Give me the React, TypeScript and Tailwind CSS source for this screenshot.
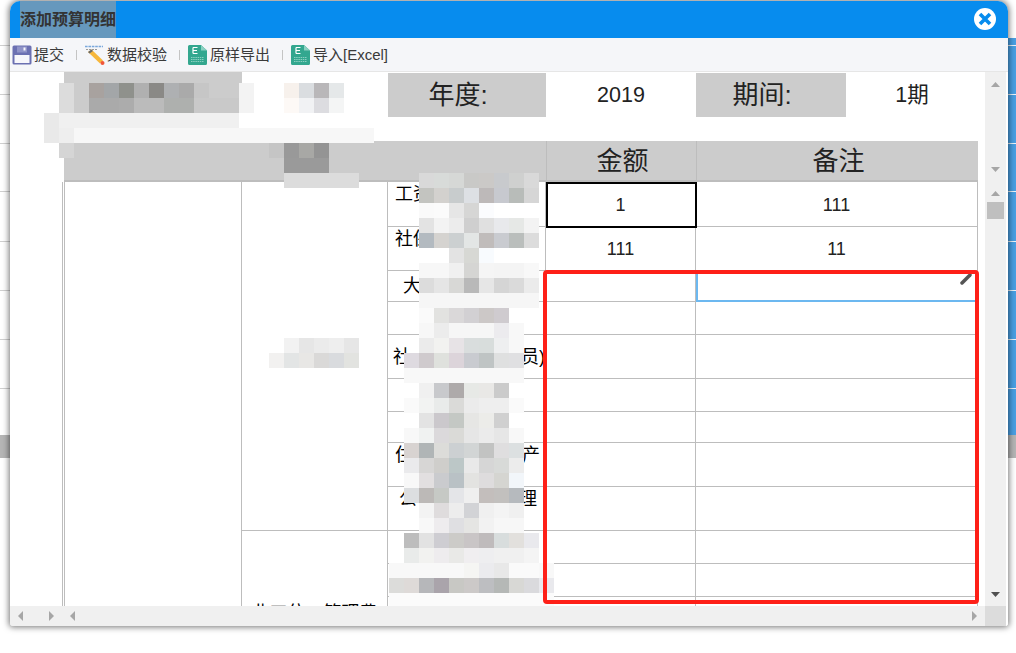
import React from 'react'

const FONT = "[font-family:'Liberation_Sans','Noto_Sans_CJK_SC',sans-serif]"

const bgLines = [45, 94, 143, 191, 241, 290, 339, 388]

// mosaic blocks over the blurred-out text, _ means see through
const blocks: { x: number; y: number; rows: string[] }[] = [
  {
    x: 59,
    y: 83,
    rows: [
      'dcdcdc cccccc a8a29f a3a6a8 8f918c b0b0b0 8a8986 aeb0b2 aaaaaa c6c6c6 cccccc cccccc f3f3f3 ffffff ffffff f7f1ec dadde0 b9b7b9 e5e8e9 ffffff ffffff',
      'dcdcdc cccccc aaaaaa aaaaaa acacac bbbbbb bbbbbb aeb0ae aeb0ae c9c9c9 c9c9c9 c9c9c9 f3f3f3 ffffff ffffff fdf9f6 f1f2f4 dcdce0 f4f5f5 ffffff ffffff',
      'f0f0f0 f0f0f0 f0f0f0 f0f0f0 f0f0f0 f0f0f0 f0f0f0 f0f0f0 f0f0f0 f0f0f0 f0f0f0 f0f0f0 ffffff ffffff ffffff ffffff ffffff ffffff ffffff ffffff ffffff',
      'eeeeee f7f7f7 f7f7f7 f7f7f7 f7f7f7 f7f7f7 f7f7f7 f7f7f7 f7f7f7 f7f7f7 f7f7f7 f7f7f7 f7f7f7 f7f7f7 f7f7f7 f7f7f7 f7f7f7 f7f7f7 f7f7f7 f7f7f7 f7f7f7',
      'd5d5d5 _ _ _ _ _ _ _ _ _ _ _ _ _ c5c5c5 999999 a8a8a5 949494 _ _',
      '_ _ _ _ _ _ _ _ _ _ _ _ _ _ _ 9a9a9a 9a9a9a 9a9a9a _ _',
    ],
  },
  { x: 44, y: 113, rows: ['e9e9e9', 'e9e9e9'] },
  {
    x: 284,
    y: 173,
    rows: ['dcdcdc dcdcdc dcdcdc dcdcdc dcdcdc'],
  },
  {
    x: 269,
    y: 338,
    rows: [
      '_ f2f2f2 e6e6e6 ebebeb eeeeee e6e6e6',
      'f2f1f0 e3e5e5 e8e7e5 dad9d8 d9dbde e2e3e0',
    ],
  },
  {
    x: 389,
    y: 173,
    rows: [
      '_ _ d9d9d9 d8dbd9 d6d8d6 c9c9c7 cbc9c7 c8cacd cfd0cf d9d9d9 _',
      '_ _ c3c4c0 d3d1ce c8cccd dde0e4 bdb9b9 c7c9cf b8bcb9 d6d6d6 _',
      '_ _ fafafa fbfbfb e6e6e6 d6d6d5 fbfcfe ffffff ffffff ffffff _',
      '_ _ e3e3e3 f3f3f3 ececec cfcfcf e0e0e0 e8e9ec e6e8e6 f3f3f3 _',
      '_ _ b3bac0 d5d3d0 ccd0d1 e3e6e5 c0bcbb c9cbd0 babebc dcdcdc _',
      '_ _ ffffff ffffff e3e3e3 d7d8d4 f8fbfe ffffff ffffff ffffff _',
      '_ _ f7f7f7 f7f7f7 f0f0f0 d5d5d3 f5f5f5 f4f4f4 f4f4f4 f8f8f8 _',
      '_ _ dcdcdc e5e5e5 d8d8d6 b9b9b9 e6e6e6 d5d5d5 dadada ebebeb _',
      '_ _ f6f6f6 f6f6f6 f6f6f6 f6f6f6 f6f6f6 f6f6f6 f6f6f6 f6f6f6 _',
      '_ _ fafafa e2e2e0 dad8d9 d2d0d3 ccc8c7 cfcbcf ffffff _ _',
      '_ _ f7f7f7 ececec f6f6f6 f6f6f6 f6f6f6 ecebee f8f8f8 _ _',
      '_ _ ebebeb f2f2f0 e7e3e6 d9dddd d8dddc eeeff0 f8f8f8 _ _',
      '_ dedae0 cfcacd dfe1dd dcd4da c9cbd0 bfc4c4 dfe0e0 e0e0e2 _ _',
      '_ f8f8f8 f8f8f8 f8f8f8 f8f8f8 f8f8f8 f8f8f8 f8f8f8 f8f8f8 _ _',
      '_ _ f0f0f0 c8c9cc aeaaaa e7e9e6 e9e8e6 cbcbcb ffffff _ _',
      '_ fafafa f2f3f2 e9ebea dadad8 ebebeb eeeeee eeeeee fafafa _ _',
      '_ _ e3e3e3 cbc8cc c4c8c4 e6e6e4 ecece9 d0d0d0 ffffff _ _',
      '_ f8f8f8 f0f2f1 dbd9db dadad7 e6e6e6 ebebeb e6e6e6 f8f8f8 _ _',
      '_ d8d3d1 b0b5b6 dcdcd9 ccd0d2 d2d5d5 c2c3c2 dfdedf dce0e1 _ _',
      '_ eaeaec d7d6d5 cfcecb bcc7c7 e9e9e9 d6d6d6 d8dad8 ececec _ _',
      '_ f8f8f8 e2dfe0 cacbce b9c1c5 e3e3e1 dedcdd d5d5d1 f2f6fa _ _',
      '_ dcdee0 bcb9b7 c6c9c5 e4e5e8 efefef c3bebc c2c0be b6babe _ _',
      '_ _ f3f3f3 dfdcdd ededed d2d3d6 f0f0f0 f4f4f4 f0f0f0 _ _',
      '_ _ f8f8f8 eeecee dfdfe2 e5e5e3 f2f2f2 f7f7f7 f7f7f7 _ _',
      '_ bdbdbd e2e2e2 cecdd2 cccbc8 c9c5c6 bfbbbc d8dddd e2e0dd e9e9ed _',
      '_ e9ebea f2f2f0 eeecee e9e9e7 f0eef0 eeeef0 f0f0f0 f0f0f0 f4f4f4 _',
      'f8f8f8 f8f8f8 f8f8f8 f8f8f8 f8f8f8 f5f5f3 ebebee e8e8e8 fafafa fafafa f8f8f8',
      'dcdcda dedad8 b6b7ba aaa4ab c8c8c4 ccc9c8 bdbec1 b5b8b6 d8d8d5 dadadd e9e9ed',
      'fbfbfb fbfbfb fbfbfb fbfbfb fbfbfb fbfbfb fbfbfb fbfbfb fbfbfb fbfbfb fbfbfb',
    ],
  },
]

const rowHeights = [45, 44, 31, 33, 44, 33, 31, 44, 44, 33, 33, 33, 33, 33]

const Triangle = ({ dir, color = '#a6a6a6' }: { dir: 'up' | 'down' | 'left' | 'right'; color?: string }) => {
  const points = {
    up: '0,5 9,5 4.5,0',
    down: '0,0 9,0 4.5,5',
    left: '5,0 5,10 0,5',
    right: '0,0 0,10 5,5',
  }[dir]
  const wide = dir === 'up' || dir === 'down'
  return (
    <svg width={wide ? 9 : 5} height={wide ? 5 : 10} viewBox={wide ? '0 0 9 5' : '0 0 5 10'} className="block">
      <polygon points={points} fill={color} />
    </svg>
  )
}

const SaveIcon = () => (
  <svg width="20" height="20" viewBox="0 0 20 20">
    <rect x="0.5" y="0.5" width="19" height="19" rx="1.5" fill="#6b70b2" />
    <rect x="2.5" y="10" width="15" height="8" fill="#f6f6fb" />
    <rect x="5" y="1.5" width="10" height="6" fill="#8f93c8" />
    <rect x="11.5" y="2.5" width="2" height="3" fill="#f6f6fb" />
  </svg>
)

const CheckIcon = () => (
  <svg width="20" height="20" viewBox="0 0 20 20">
    <path d="M0 1.5h18" stroke="#7aa8dc" strokeWidth="1.4" strokeDasharray="2.6 0.8" />
    <path d="M1 4.5h12" stroke="#9a9a9a" strokeWidth="1" strokeDasharray="2 1" />
    <path d="M3 7 6.500 4.500 18 15.500 15 18.500Z" fill="#f6b73c" />
    <path d="M3 7 6.500 4.500 8 6 4.500 8.500Z" fill="#6a6a6a" />
    <circle cx="17.500" cy="18" r="2" fill="#f0563a" />
  </svg>
)

const SheetIcon = () => (
  <svg width="19" height="20" viewBox="0 0 19 20">
    <path d="M0 1.5A1.5 1.5 0 0 1 1.5 0H13l6 5.5V18.500A1.500 1.500 0 0 1 17.500 20H1.500A1.500 1.500 0 0 1 0 18.500Z" fill="#33a78f" />
    <path d="M13 0l6 5.500h-6Z" fill="#8bd0c1" />
    <path d="M5 2.500H9.500M5 5.500H9M5 8.500H9.500M5 2.500V8.500" stroke="#fff" strokeWidth="1.200" fill="none" />
    <path d="M3 12.500H16M3 14.500H16M3 16.500H16" stroke="#8bd0c1" strokeWidth="1" strokeDasharray="1.500 0.700" />
  </svg>
)

const CloseIcon = () => (
  <svg width="22" height="22" viewBox="0 0 22 22">
    <circle cx="11" cy="11" r="11" fill="#fff" />
    <path d="M6 6 16 16M16 6 6 16" stroke="#078cee" strokeWidth="3.600" />
  </svg>
)

const ToolItem = ({ icon, label, width, gap }: { icon: React.ReactNode; label: string; width: string; gap: string }) => (
  <div className={`flex items-center ${gap} ${width}`}>
    {icon}
    <span className="text-[15px] leading-none whitespace-nowrap text-[#3a3a3a]">{label}</span>
  </div>
)

const Sep = () => <div className="h-[10px] w-px bg-[#c4c4c4]" />

function BudgetTable() {
  const cell = 'border-r border-b border-[#bdbdbd] pt-[2px] align-middle text-center'
  const label = 'border-r border-b border-[#bdbdbd] px-[7px] text-[18px] leading-[22px] text-black'
  const firstRows: React.ReactNode[] = [
    <td key="c" className={`${label} align-top pt-[1px]`}>工资</td>,
    <td key="c" className={`${label} align-top pt-[1px]`}>社保</td>,
    <td key="c" className={`${label} pl-[15px]`}>大</td>,
    <td key="c" className={label}></td>,
    <td key="c" className={`${label} pl-[5px] pr-0`}>
      <div className="flex justify-between"><span>社</span><span>员)</span></div>
    </td>,
    <td key="c" className={label}></td>,
    <td key="c" className={label}></td>,
    <td key="c" className={`${label} pt-[1px] pr-[5px] align-top`}>
      <div className="flex justify-between"><span>住</span><span>产</span></div>
    </td>,
    <td key="c" className={`${label} pt-[1px] pl-[11px] pr-[8px] align-top`}>
      <div className="flex justify-between"><span>公</span><span>理</span></div>
    </td>,
  ]
  const values = [['1', '111'], ['111', '11']]

  return (
    <table className="w-[915px] table-fixed border-separate border-spacing-0">
      <colgroup>
        <col className="w-[179px]" />
        <col className="w-[146px]" />
        <col className="w-[158px]" />
        <col className="w-[150px]" />
        <col className="w-[282px]" />
      </colgroup>
      <tbody>
        {rowHeights.map((h, i) => (
          <tr key={i} style={{ height: h }}>
            {i === 0 && (
              <td
                rowSpan={14}
                className="border-r border-[#bdbdbd] shadow-[inset_1px_0_0_#ffffff,inset_2px_0_0_#bdbdbd,-1px_0_0_#bdbdbd]"
              ></td>
            )}
            {i === 0 && <td rowSpan={9} className="border-r border-b border-[#bdbdbd]"></td>}
            {i === 9 && (
              <td rowSpan={5} className="border-r border-[#bdbdbd] text-center text-[18px] whitespace-nowrap text-black">
                业工位一管理费
              </td>
            )}
            {firstRows[i] ?? <td className={label}></td>}
            <td className={`${cell} text-[18px] text-[#222]`}>{values[i]?.[0]}</td>
            <td className={`${cell} text-[18px] text-[#222]`}>{values[i]?.[1]}</td>
          </tr>
        ))}
      </tbody>
    </table>
  )
}

export default function App() {
  return (
    <div className={`relative h-[653px] w-[1016px] overflow-hidden bg-white ${FONT}`}>
      {/* page behind the dialog */}
      <div className="flex h-[458px] flex-col">
        <div className="h-[38px]" />
        <div className="flex h-[397px] justify-end">
          <div className="w-[10px] bg-[#4a9fe3]" />
        </div>
        <div className="h-[23px] bg-[#b5b5b5]" />
      </div>
      {bgLines.map(y => (
        <div key={y} className="absolute inset-x-0 flex h-px" style={{ top: y }}>
          <div className="flex-1 bg-[#cfcfcf]" />
          <div className="w-[10px] bg-[#eef5fb]" />
        </div>
      ))}

      {/* dialog */}
      <div className="absolute top-[1px] left-[10px] flex h-[625px] w-[998px] flex-col overflow-hidden rounded-t-[10px] rounded-b-[3px] bg-[#f0f0f0] shadow-[0_0_6px_1px_rgba(0,0,0,0.55)]">
        <div className="flex h-[37px] shrink-0 items-center justify-between bg-[#078cee] pr-[12px] pl-[10px]">
          <div className="flex h-full w-[96px] items-center bg-[#6698bd] text-[16px] font-bold whitespace-nowrap text-[#333]">
            添加预算明细
          </div>
          <div className="-mt-[1px]"><CloseIcon /></div>
        </div>

        <div className="flex h-[34px] shrink-0 items-center border-b border-[#e6e6e6] bg-[#f5f6f9] pl-[2px]">
          <ToolItem icon={<SaveIcon />} label="提交" width="w-[64px]" gap="gap-[2px]" />
          <Sep />
          <div className="ml-[8px]"><ToolItem icon={<CheckIcon />} label="数据校验" width="w-[94px]" gap="gap-[2px]" /></div>
          <Sep />
          <div className="ml-[8px]"><ToolItem icon={<SheetIcon />} label="原样导出" width="w-[94px]" gap="gap-[3px]" /></div>
          <Sep />
          <div className="ml-[8px]"><ToolItem icon={<SheetIcon />} label="导入[Excel]" width="w-[100px]" gap="gap-[3px]" /></div>
        </div>

        <div className="flex min-h-0 flex-1">
          <div className="relative w-[975px] overflow-hidden bg-white pl-[53px]">
            <div className="flex h-[45px] pt-px text-[#222]">
              <div className="w-[325px]">
                <div className="-mt-px ml-px h-[44px] w-[178px] bg-[#cccccc]" />
              </div>
              <div className="flex h-[44px] w-[158px] items-center justify-center bg-[#cccccc] pr-[18px] text-[26px]">年度:</div>
              <div className="flex h-[44px] w-[150px] items-center justify-center text-[21.500px]">2019</div>
              <div className="flex h-[44px] w-[150px] items-center justify-center bg-[#cccccc] pr-[18px] text-[26px]">期间:</div>
              <div className="flex h-[44px] w-[132px] items-center justify-center text-[21.500px]">1期</div>
            </div>

            <div className="mt-[24px] ml-px flex h-[41px] w-[914px] border-b-2 border-[#bdbdbd] bg-[#cccccc] text-[26px] text-[#222]">
              <div className="w-[482px]" />
              <div className="flex w-[150px] items-center justify-center border-l border-[#bdbdbd] pt-[2px] pl-[2px]">金额</div>
              <div className="flex flex-1 items-center justify-center border-l border-[#bdbdbd] pt-[2px] pl-[2px]">备注</div>
            </div>

            <BudgetTable />

            {blocks.map(b => (
              <div key={`${b.x}-${b.y}`} className="absolute flex flex-col" style={{ left: b.x - 10, top: b.y - 72 }}>
                {b.rows.map((row, r) => (
                  <div key={r} className="flex">
                    {row.split(' ').map((c, k) => (
                      <div key={k} className="h-[15px] w-[15px]" style={{ background: c === '_' ? 'transparent' : `#${c}` }} />
                    ))}
                  </div>
                ))}
              </div>
            ))}

            {/* selected cells */}
            <div className="absolute top-[110px] left-[536px] h-[46px] w-[151px] border-2 border-black" />
            <div className="absolute top-[199px] left-[686px] h-[31px] w-[282px] border-b-2 border-l-2 border-[#6cb8f0]" />
            <svg width="12" height="12" viewBox="0 0 12 12" className="absolute top-[201px] left-[950px]">
              <path d="M2 10 10 2" stroke="#555" strokeWidth="3.500" strokeLinecap="round" />
            </svg>
            {/* red mark drawn on the screenshot */}
            <div className="absolute top-[198px] left-[533px] h-[334px] w-[436px] rounded-[4px] border-4 border-[#fe2018]" />
          </div>

          <div className="relative flex w-[21px] flex-col items-center bg-[#f0f0f0] pt-[10px]">
            <Triangle dir="up" />
            <div className="mt-[80px]"><Triangle dir="down" /></div>
            <div className="mt-[19px]"><Triangle dir="up" /></div>
            <div className="mt-[6px] h-[17px] w-[17px] bg-[#bfbfbf]" />
            <div className="mt-auto mb-[9px]"><Triangle dir="down" color="#505050" /></div>
          </div>
          <div className="w-[2px] bg-white" />
        </div>

        <div className="flex h-[20px] shrink-0 bg-[#f0f0f0]">
          <div className="flex w-[975px] items-center pr-[3px] pl-[8px]">
            <Triangle dir="left" />
            <div className="ml-[26px]"><Triangle dir="right" /></div>
            <div className="ml-[16px]"><Triangle dir="left" /></div>
            <div className="mr-[5px] ml-auto"><Triangle dir="right" /></div>
          </div>
          <div className="w-[21px] bg-[#dcdcdc]" />
          <div className="w-[2px] bg-white" />
        </div>
      </div>
    </div>
  )
}
